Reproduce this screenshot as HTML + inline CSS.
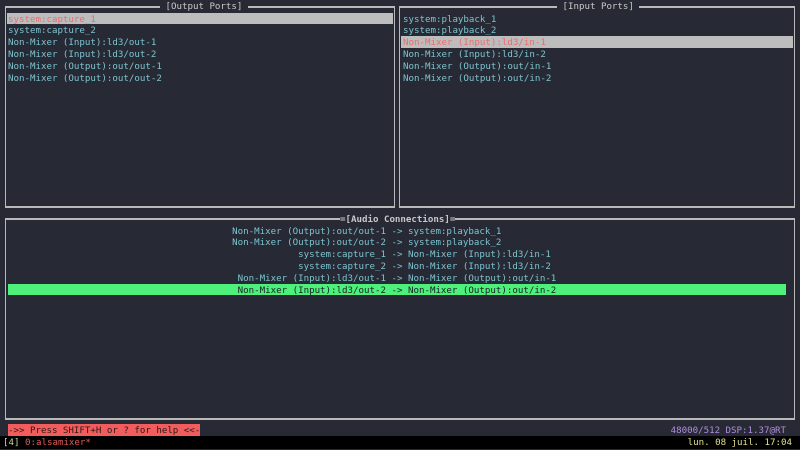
<!DOCTYPE html>
<html><head><meta charset="utf-8">
<style>
html,body{margin:0;padding:0;}
body{width:800px;height:449px;background:#272a35;position:relative;overflow:hidden;
font-family:"DejaVu Sans Mono","Liberation Mono",monospace;font-size:9.14px;color:#7cc4d0;}
.t{position:absolute;height:9.8px;padding-top:2px;line-height:11.8px;white-space:pre;}
.box{position:absolute;border:1px solid #b9b9b9;box-sizing:border-box;}
.title{position:absolute;background:#272a35;color:#c8c8c8;white-space:pre;height:9.8px;padding-top:2px;line-height:11.8px;}
.hl{background:#bdbdbd;color:#f06a6a;}
.g{background:#4df07a;color:#1c1f28;}
</style></head><body>
<div class="box" style="left:5px;top:6px;width:390px;height:202px;border-width:2px 1px 2px 1px;"></div>
<div class="box" style="left:399px;top:6px;width:396px;height:202px;border-width:2px 1px 2px 1px;"></div>
<div class="box" style="left:5px;top:218px;width:790px;height:202px;border-width:2px 1px 2px 1px;"></div>

<div class="title" style="left:160px;top:0;">&nbsp;[Output Ports]&nbsp;</div>
<div class="title" style="left:557px;top:0;">&nbsp;[Input Ports]&nbsp;</div>
<div class="title" style="left:340px;top:212.5px;font-weight:bold;">=[Audio Connections]=</div>

<div class="t hl" style="left:7px;width:385px;top:12.5px;padding-left:1px;">system:capture_1</div>
<div class="t" style="left:8px;top:24.3px;">system:capture_2</div>
<div class="t" style="left:8px;top:36.1px;">Non-Mixer (Input):ld3/out-1</div>
<div class="t" style="left:8px;top:47.9px;">Non-Mixer (Input):ld3/out-2</div>
<div class="t" style="left:8px;top:59.7px;">Non-Mixer (Output):out/out-1</div>
<div class="t" style="left:8px;top:71.5px;">Non-Mixer (Output):out/out-2</div>

<div class="t" style="left:403px;top:12.5px;">system:playback_1</div>
<div class="t" style="left:403px;top:24.3px;">system:playback_2</div>
<div class="t hl" style="left:401px;width:390px;top:36.1px;padding-left:2px;">Non-Mixer (Input):ld3/in-1</div>
<div class="t" style="left:403px;top:47.9px;">Non-Mixer (Input):ld3/in-2</div>
<div class="t" style="left:403px;top:59.7px;">Non-Mixer (Output):out/in-1</div>
<div class="t" style="left:403px;top:71.5px;">Non-Mixer (Output):out/in-2</div>

<div class="t" style="right:414px;top:224.5px;">Non-Mixer (Output):out/out-1</div><div class="t" style="left:386px;top:224.5px;"> -&gt; system:playback_1</div>
<div class="t" style="right:414px;top:236.3px;">Non-Mixer (Output):out/out-2</div><div class="t" style="left:386px;top:236.3px;"> -&gt; system:playback_2</div>
<div class="t" style="right:414px;top:248.1px;">system:capture_1</div><div class="t" style="left:386px;top:248.1px;"> -&gt; Non-Mixer (Input):ld3/in-1</div>
<div class="t" style="right:414px;top:259.9px;">system:capture_2</div><div class="t" style="left:386px;top:259.9px;"> -&gt; Non-Mixer (Input):ld3/in-2</div>
<div class="t" style="right:414px;top:271.7px;">Non-Mixer (Input):ld3/out-1</div><div class="t" style="left:386px;top:271.7px;"> -&gt; Non-Mixer (Output):out/in-1</div>
<div class="t g" style="left:8px;width:778px;top:283.5px;"></div>
<div class="t" style="right:414px;top:283.5px;color:#1c1f28;">Non-Mixer (Input):ld3/out-2</div><div class="t" style="left:386px;top:283.5px;color:#1c1f28;"> -&gt; Non-Mixer (Output):out/in-2</div>

<div class="t" style="left:8px;top:424px;background:#f25c5c;color:#2a1a1a;">-&gt;&gt; Press SHIFT+H or ? for help &lt;&lt;-</div>
<div class="t" style="right:14px;top:424px;color:#b08ce0;">48000/512 DSP:1.37@RT</div>

<div style="position:absolute;left:0;top:435.5px;width:800px;height:13.5px;background:#000;"></div>
<div class="t" style="left:3px;top:436px;color:#c8d89a;">[4] <span style="color:#e05a5a;">0:alsamixer*</span></div>
<div class="t" style="right:8px;top:436px;color:#e3e08a;">lun. 08 juil. 17:04</div>
</body></html>
